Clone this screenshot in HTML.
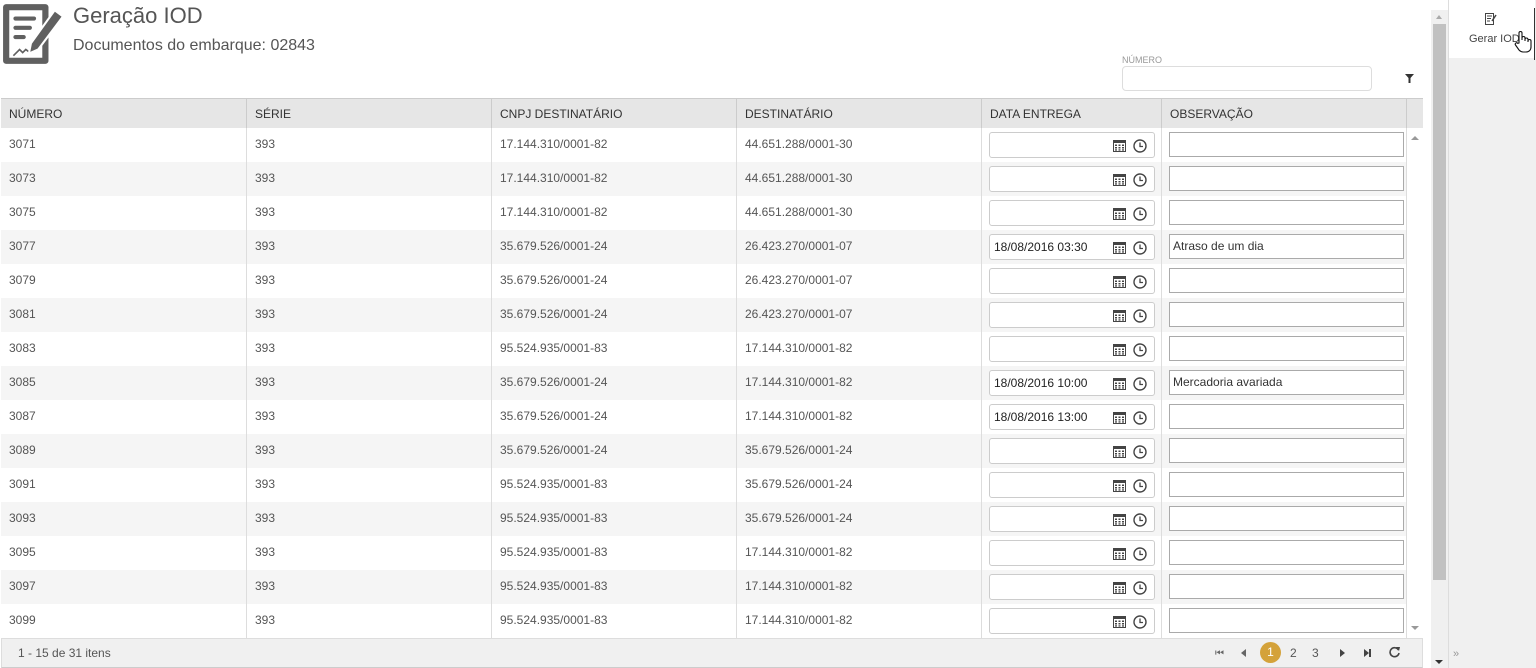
<!DOCTYPE html>
<html><head><meta charset="utf-8"><style>
*{box-sizing:border-box;margin:0;padding:0}
body{width:1536px;height:668px;overflow:hidden;background:#fff;font-family:"Liberation Sans",sans-serif;font-size:12px;color:#555;position:relative}
.abs{position:absolute}
.hdr{position:absolute;top:98px;left:1px;width:1422px;height:30px;background:#e6e6e6;border-top:1px solid #ccc}
.hc{position:absolute;top:0;height:30px;line-height:30px;padding-left:8px;color:#333;border-left:1px solid #ccc}
.row{position:absolute;left:1px;width:1405px;height:34px}
.c{position:absolute;top:0;height:34px;line-height:32px;padding-left:8px;border-left:1px solid #ddd;font-size:12px}
.di{position:absolute;left:988px;width:166px;height:26px;border:1px solid #ccc;border-radius:3px;background:#fff;font-size:12px;color:#222;line-height:24px;padding-left:4px}
.oi{position:absolute;left:1168px;width:235px;height:25px;border:1px solid #aaa;background:#fff;font-size:12px;color:#333;line-height:23px;padding-left:3px}
.ic{position:absolute;top:6px}
</style></head><body>
<svg class="abs" style="left:1px;top:2px" width="64" height="64" viewBox="0 0 62 62">
<rect x="2" y="2" width="44" height="58" rx="3" fill="#606060"/>
<rect x="8" y="8" width="32" height="46" fill="#fff"/>
<rect x="12" y="14" width="22" height="4" rx="2" fill="#606060"/>
<rect x="12" y="23" width="18" height="4" rx="2" fill="#606060"/>
<rect x="12" y="32" width="12" height="4" rx="2" fill="#606060"/>
<path d="M12 52 l6-6 3 3 3-3 4 3" stroke="#606060" stroke-width="1.6" fill="none"/>
<path d="M52 8 l8 6 -24 32 -9 4 2-10z" fill="#606060" stroke="#fff" stroke-width="2"/>
</svg>
<div class="abs" style="left:73px;top:3px;font-size:22px;color:#555">Geração IOD</div>
<div class="abs" style="left:73px;top:37px;font-size:16px;color:#555">Documentos do embarque: 02843</div>
<div class="abs" style="left:1122px;top:55px;font-size:9px;color:#999">NÚMERO</div>
<div class="abs" style="left:1122px;top:66px;width:250px;height:25px;border:1px solid #ddd;border-radius:4px"></div>
<svg class="abs" style="left:1405px;top:74px" width="9" height="9" viewBox="0 0 9 9"><path d="M0 0h9L5.5 4v5h-2V4z" fill="#333"/></svg>

<div class="hdr">
<div class="hc" style="left:0;border-left:none">NÚMERO</div>
<div class="hc" style="left:245px">SÉRIE</div>
<div class="hc" style="left:490px">CNPJ DESTINATÁRIO</div>
<div class="hc" style="left:735px">DESTINATÁRIO</div>
<div class="hc" style="left:980px">DATA ENTREGA</div>
<div class="hc" style="left:1160px">OBSERVAÇÃO</div>
<div class="hc" style="left:1405px;width:17px"></div>
</div>
<div class="abs" style="left:1406px;top:128px;width:17px;height:510px;background:#fff;border-left:1px solid #ddd"></div>
<div class="abs" style="left:1411px;top:136px;width:0;height:0;border:4px solid transparent;border-bottom:4px solid #999;border-top:none"></div>
<div class="abs" style="left:1411px;top:626px;width:0;height:0;border:4px solid transparent;border-top:4px solid #999;border-bottom:none"></div>

<div id="rows"></div>
<script>
const d=[["3071","17.144.310/0001-82","44.651.288/0001-30","",""],["3073","17.144.310/0001-82","44.651.288/0001-30","",""],["3075","17.144.310/0001-82","44.651.288/0001-30","",""],["3077","35.679.526/0001-24","26.423.270/0001-07","18/08/2016 03:30","Atraso de um dia"],["3079","35.679.526/0001-24","26.423.270/0001-07","",""],["3081","35.679.526/0001-24","26.423.270/0001-07","",""],["3083","95.524.935/0001-83","17.144.310/0001-82","",""],["3085","35.679.526/0001-24","17.144.310/0001-82","18/08/2016 10:00","Mercadoria avariada"],["3087","35.679.526/0001-24","17.144.310/0001-82","18/08/2016 13:00",""],["3089","35.679.526/0001-24","35.679.526/0001-24","",""],["3091","95.524.935/0001-83","35.679.526/0001-24","",""],["3093","95.524.935/0001-83","35.679.526/0001-24","",""],["3095","95.524.935/0001-83","17.144.310/0001-82","",""],["3097","95.524.935/0001-83","17.144.310/0001-82","",""],["3099","95.524.935/0001-83","17.144.310/0001-82","",""]];
const cal='<svg class="ic" style="left:123px" width="13" height="13" viewBox="0 0 13 13"><rect x="0.5" y="1.5" width="12" height="11" fill="none" stroke="#444"/><rect x="0.5" y="1.5" width="12" height="2.5" fill="#444"/><g fill="#444"><rect x="2" y="5.5" width="2" height="1.5"/><rect x="5.5" y="5.5" width="2" height="1.5"/><rect x="9" y="5.5" width="2" height="1.5"/><rect x="2" y="8" width="2" height="1.5"/><rect x="5.5" y="8" width="2" height="1.5"/><rect x="9" y="8" width="2" height="1.5"/><rect x="2" y="10.3" width="2" height="1.3"/><rect x="5.5" y="10.3" width="2" height="1.3"/><rect x="9" y="10.3" width="2" height="1.3"/></g></svg>';
const clk='<svg class="ic" style="left:143px" width="14" height="14" viewBox="0 0 14 14"><circle cx="7" cy="7" r="6" fill="none" stroke="#444" stroke-width="1.4"/><path d="M7 3.5V7.5H10" stroke="#444" stroke-width="1.3" fill="none"/></svg>';
let h='';
d.forEach((r,i)=>{const t=128+34*i;h+=`<div class="row" style="top:${t}px;background:${i%2?'#f5f5f5':'#fff'}">
<div class="c" style="left:0;border-left:none">${r[0]}</div><div class="c" style="left:245px">393</div><div class="c" style="left:490px">${r[1]}</div><div class="c" style="left:735px">${r[2]}</div><div class="c" style="left:980px;width:180px"></div><div class="c" style="left:1160px;width:245px"></div>
<div class="di" style="top:4px">${r[3]}${cal}${clk}</div><div class="oi" style="top:4px">${r[4]}</div></div>`});
document.getElementById('rows').innerHTML=h;
</script>

<div class="abs" style="left:1px;top:638px;width:1422px;height:30px;background:#f0f0f0;border-top:1px solid #ddd;border-bottom:1px solid #ccc;border-left:1px solid #ddd;border-right:1px solid #ddd"></div>
<div class="abs" style="left:18px;top:646px;font-size:12px;color:#555">1 - 15 de 31 itens</div>
<div class="abs" style="left:1215px;top:648px;font-size:10px;color:#666">⏮</div>
<div class="abs" style="left:1241px;top:649px;width:0;height:0;border:4px solid transparent;border-right:5px solid #666;border-left:none"></div>
<div class="abs" style="left:1260px;top:642px;width:21px;height:21px;border-radius:50%;background:#d4a23a;color:#fff;text-align:center;line-height:21px">1</div>
<div class="abs" style="left:1290px;top:646px;color:#555">2</div>
<div class="abs" style="left:1312px;top:646px;color:#555">3</div>
<div class="abs" style="left:1340px;top:649px;width:0;height:0;border:4px solid transparent;border-left:5px solid #444;border-right:none"></div>
<div class="abs" style="left:1364px;top:649px;width:0;height:0;border:4px solid transparent;border-left:5px solid #444;border-right:none"></div>
<div class="abs" style="left:1369px;top:649px;width:2px;height:8px;background:#444"></div>
<svg class="abs" style="left:1389px;top:646px" width="12" height="12" viewBox="0 0 12 12"><path d="M9.5 4A4.5 4.5 0 1 0 10 7" fill="none" stroke="#444" stroke-width="1.6"/><path d="M7 1l4 0-1 4z" fill="#444"/></svg>

<div class="abs" style="left:1431px;top:10px;width:17px;height:658px;background:#f0f0f0"></div>
<div class="abs" style="left:1433px;top:24px;width:13px;height:556px;background:#c1c1c1"></div>
<div class="abs" style="left:1436px;top:15px;width:0;height:0;border:3px solid transparent;border-bottom:4px solid #aaa;border-top:none"></div>
<div class="abs" style="left:1435px;top:660px;width:0;height:0;border:4px solid transparent;border-top:4px solid #333;border-bottom:none"></div>
<div class="abs" style="left:1448px;top:0;width:88px;height:668px;background:#f0f0f0;border-left:1px solid #ddd"></div>
<div class="abs" style="left:1449px;top:0;width:86px;height:58px;background:#fff"></div>
<div class="abs" style="left:1534px;top:8px;width:1px;height:52px;background:#333"></div>
<svg class="abs" style="left:1485px;top:13px" width="12" height="12" viewBox="0 0 12 12"><rect x="0.5" y="0.5" width="8" height="11" fill="none" stroke="#444"/><path d="M2 3h5M2 5.5h4M2 8h3" stroke="#444"/><path d="M11 2L7 8" stroke="#444" stroke-width="1.5"/></svg>
<div class="abs" style="left:1469px;top:33px;font-size:11px;color:#444">Gerar IOD</div>
<svg class="abs" style="left:1514px;top:30px" width="18" height="24" viewBox="0 0 18 24"><path d="M5 13V3a1.5 1.5 0 0 1 3 0v7V8a1.5 1.5 0 0 1 3 0v3V9.5a1.5 1.5 0 0 1 3 0V12v-1a1.5 1.5 0 0 1 3 0v6c0 3-2 5-5 5H9c-2 0-3-1-4-2l-3.5-5a1.4 1.4 0 0 1 2.3-1.6z" fill="#fff" stroke="#111" stroke-width="1.1"/></svg>
<div class="abs" style="left:1453px;top:648px;font-size:11px;color:#999">»</div>
</body></html>
